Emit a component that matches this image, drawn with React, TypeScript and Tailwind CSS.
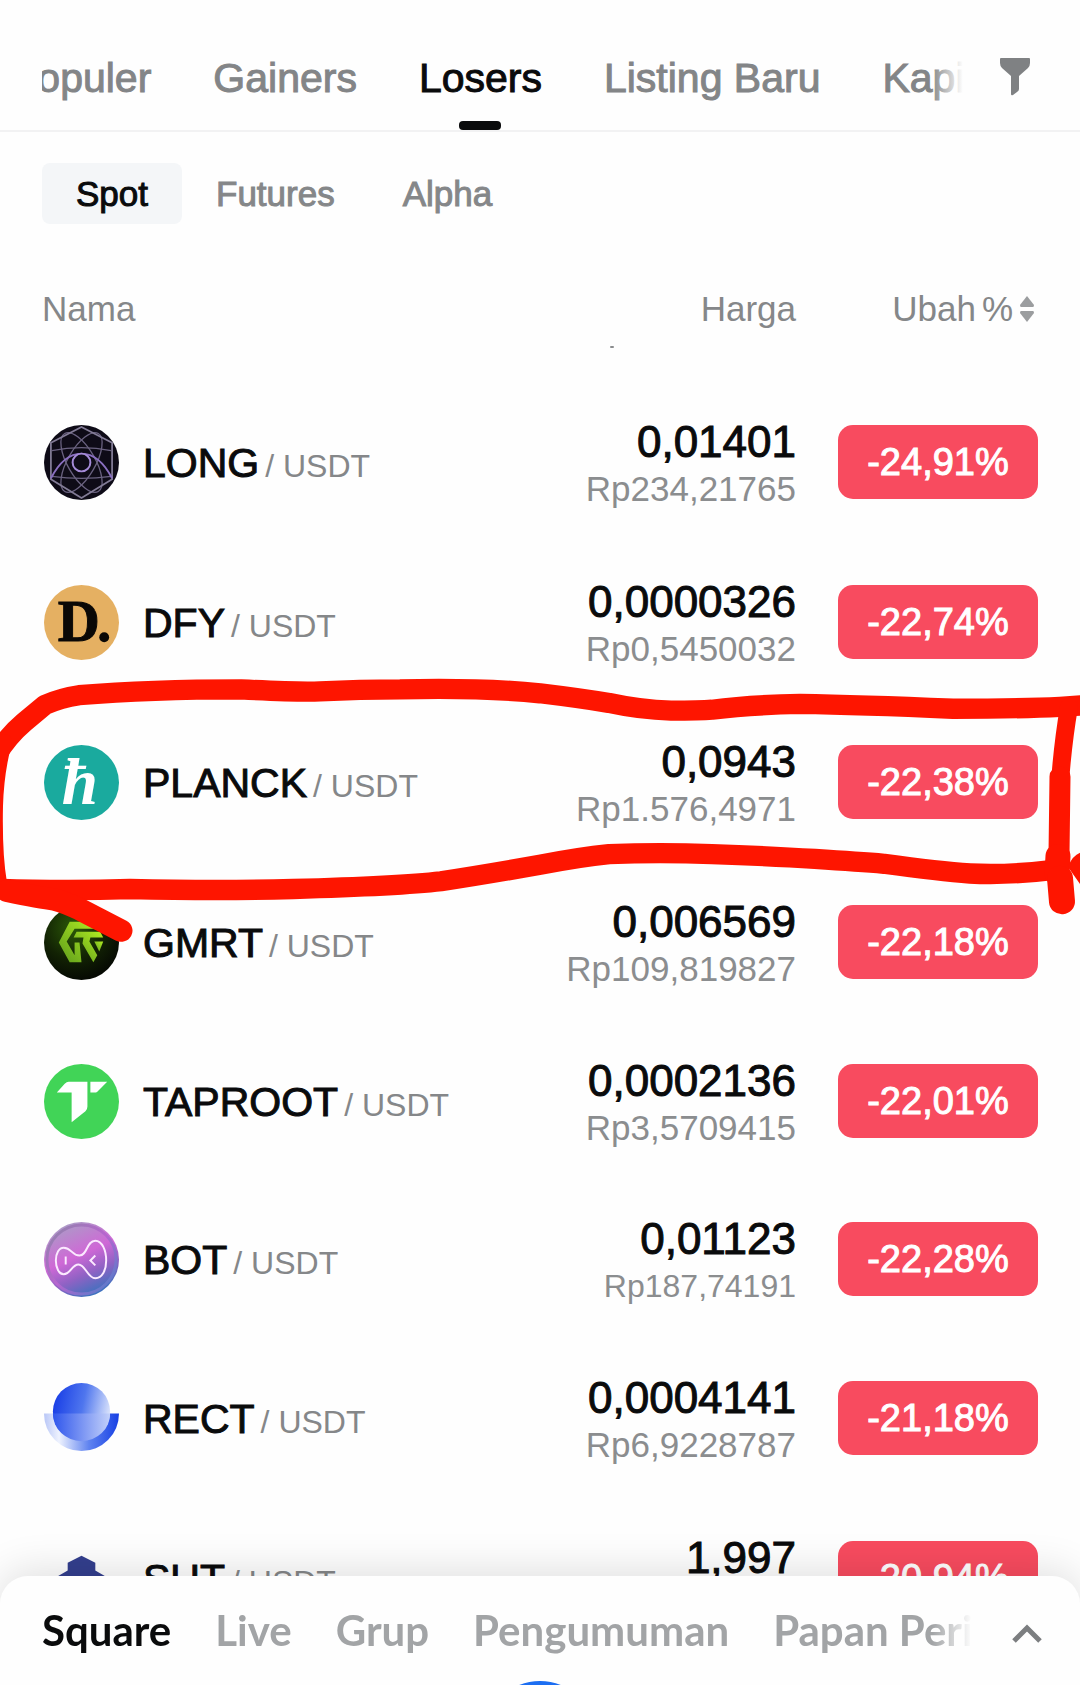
import { useState } from 'react';

interface Coin {
  symbol: string;
  price: string;
  fiat: string;
  change: string;
  icon: React.ReactNode;
  rowHeight?: string;
  smallFiat?: boolean;
}

const MARKET_TABS = ['Populer', 'Gainers', 'Losers', 'Listing Baru', 'Kapitalisasi'];
const PRODUCT_TABS = ['Spot', 'Futures', 'Alpha'];
const FEED_TABS = ['Square', 'Live', 'Grup', 'Pengumuman', 'Papan Peringkat'];

const COINS: Coin[] = [
  { symbol: 'LONG', price: '0,01401', fiat: 'Rp234,21765', change: '-24,91%', icon: <LongIcon /> },
  { symbol: 'DFY', price: '0,0000326', fiat: 'Rp0,5450032', change: '-22,74%', icon: <DfyIcon /> },
  { symbol: 'PLANCK', price: '0,0943', fiat: 'Rp1.576,4971', change: '-22,38%', icon: <PlanckIcon /> },
  { symbol: 'GMRT', price: '0,006569', fiat: 'Rp109,819827', change: '-22,18%', icon: <GmrtIcon /> },
  { symbol: 'TAPROOT', price: '0,0002136', fiat: 'Rp3,5709415', change: '-22,01%', icon: <TaprootIcon />, rowHeight: 'h-[158px]' },
  { symbol: 'BOT', price: '0,01123', fiat: 'Rp187,74191', change: '-22,28%', icon: <BotIcon />, rowHeight: 'h-[158px]', smallFiat: true },
  { symbol: 'RECT', price: '0,0004141', fiat: 'Rp6,9228787', change: '-21,18%', icon: <RectIcon /> },
  { symbol: 'SUT', price: '1,997', fiat: 'Rp33.385,84', change: '-20,94%', icon: <SutIcon /> },
];

export default function App() {
  const [market, setMarket] = useState('Losers');
  const [product, setProduct] = useState('Spot');
  const [feed, setFeed] = useState('Square');

  return (
    <div className="h-screen overflow-hidden bg-[#fefefe] font-['Liberation_Sans',Arial,sans-serif] text-[#0a0b0c]">
      {/* Market tabs, scrolled a little to the right */}
      <header className="flex h-[132px] items-stretch border-b-2 border-[#f2f2f3] px-[42px]">
        <nav className="relative min-w-0 flex-1 overflow-hidden">
          <div className="-ml-8 flex h-full gap-[62px] pt-[26px]">
            {MARKET_TABS.map((tab) => (
              <button
                key={tab}
                onClick={() => setMarket(tab)}
                className={`relative shrink-0 whitespace-nowrap text-[41px] leading-[104px] [-webkit-text-stroke:1px] ${
                  market === tab ? 'text-[#0a0b0c]' : 'text-[#838587]'
                }`}
              >
                {tab}
                {market === tab && (
                  <span className="absolute bottom-0 left-1/2 h-[9px] w-[42px] -translate-x-1/2 rounded-[4px] bg-[#0a0b0c]" />
                )}
              </button>
            ))}
          </div>
          <div className="absolute inset-y-0 right-0 w-8 bg-linear-to-r from-[#fefefe]/0 to-[#fefefe]" />
        </nav>
        <button aria-label="Filter" className="ml-9 mr-[7px] mt-[58px] flex h-[38px] w-8 shrink-0">
          <FilterIcon />
        </button>
      </header>

      {/* Product tabs */}
      <div className="flex px-[42px] pt-[31px]">
        {PRODUCT_TABS.map((tab) => (
          <button
            key={tab}
            onClick={() => setProduct(tab)}
            className={`h-[61px] rounded-lg px-[34px] text-[35px] leading-[61px] [-webkit-text-stroke:1px] ${
              product === tab ? 'bg-[#f4f6f8] text-[#0a0b0c]' : 'text-[#858789]'
            }`}
          >
            {tab}
          </button>
        ))}
      </div>

      <main className="relative pt-3">
        <table className="w-full border-collapse">
          <thead>
            <tr className="h-[146px] text-[35px] text-[#858789]">
              <th scope="col" className="pl-[42px] text-left font-normal">Nama</th>
              <th scope="col" className="relative pr-px text-right font-normal">
                Harga
                <span className="absolute bottom-[34px] right-[183px] h-0.5 w-1 rounded-full bg-[#8a8c8e]" />
              </th>
              <th scope="col" className="w-[283px] pr-[45px] text-right font-normal">
                <button className="inline-flex items-center gap-[6px] whitespace-nowrap">
                  <span>Ubah</span>
                  <span>%</span>
                  <SortIcon />
                </button>
              </th>
            </tr>
          </thead>
          <tbody>
            {COINS.map((coin) => (
              <CoinRow key={coin.symbol} coin={coin} />
            ))}
          </tbody>
        </table>
        <MarkerStroke />
      </main>

      {/* Feed sheet */}
      <footer className="fixed inset-x-0 bottom-0 h-[109px] rounded-t-[28px] bg-[#fefefe] shadow-[0_-6px_40px_rgba(0,0,0,0.12)]">
        <div className="flex h-full items-start pl-[42px] pr-[38px] pt-[26px]">
          <nav className="relative min-w-0 flex-1 overflow-hidden">
            <div className="flex gap-11">
              {FEED_TABS.map((tab) => (
                <button
                  key={tab}
                  onClick={() => setFeed(tab)}
                  className={`shrink-0 whitespace-nowrap font-['Lato',sans-serif] text-[42px] font-bold leading-[56px] ${
                    feed === tab ? 'text-[#0a0b0c]' : 'text-[#a2a4a6]'
                  }`}
                >
                  {tab}
                </button>
              ))}
            </div>
            <div className="absolute inset-y-0 right-0 w-10 bg-linear-to-r from-[#fefefe]/0 to-[#fefefe]" />
          </nav>
          <button aria-label="Buka" className="ml-10 mt-5 shrink-0">
            <ChevronIcon />
          </button>
        </div>
        <div className="absolute inset-x-0 bottom-0 flex h-1 justify-center overflow-hidden">
          <span className="size-28 shrink-0 rounded-full bg-[#1c6ef2]" />
        </div>
      </footer>
    </div>
  );
}

function CoinRow({ coin }: { coin: Coin }) {
  return (
    <tr className={coin.rowHeight ?? 'h-40'}>
      <td className="pl-11">
        <div className="flex items-center gap-6">
          <span className="size-[75px] shrink-0">{coin.icon}</span>
          <span className="flex items-baseline gap-[6px] whitespace-nowrap pt-1">
            <span className="text-[41px] leading-[48px] [-webkit-text-stroke:1px]">{coin.symbol}</span>
            <span className="text-[32px] text-[#858789]">/ USDT</span>
          </span>
        </div>
      </td>
      <td className="pr-px text-right">
        <div className="pt-[6px] text-[44px] leading-[48px] [-webkit-text-stroke:1px]">{coin.price}</div>
        <div className={`text-[#8b8d8f] ${coin.smallFiat ? 'text-[32px] leading-[46px]' : 'text-[35px] leading-[46px]'}`}>
          {coin.fiat}
        </div>
      </td>
      <td className="pl-[41px] pr-[42px]">
        <div className="h-[74px] rounded-[15px] bg-[#f84b5f] text-center text-[38px] leading-[74px] text-white [-webkit-text-stroke:1px]">
          {coin.change}
        </div>
      </td>
    </tr>
  );
}

/* Freehand red circle around the PLANCK row */
function MarkerStroke() {
  return (
    <svg
      className="pointer-events-none absolute left-0 top-[446px] h-[281px] w-full"
      viewBox="0 670 1080 290"
      preserveAspectRatio="none"
      fill="none"
      stroke="#fe1500"
      strokeLinecap="round"
      strokeLinejoin="round"
    >
      <path
        strokeWidth="21"
        d="M-4 758Q8 738 24 724L45 706Q60 699 79 696Q150 690 241 690Q300 693 320 692Q360 690 400 690Q480 688 540 694Q580 699 609 704Q640 711 671 712Q700 712 712 711Q750 706 800 705Q860 706 953 710Q1020 710 1060 708L1090 706"
      />
      <path strokeWidth="16" d="M4 744Q-4 775 -5 810Q-6 860 -1 890" />
      <path
        strokeWidth="21"
        d="M2 896Q30 897 69 897Q100 897 130 896Q220 898 293 896Q400 893 441 888Q480 882 540 871Q580 863 609 860Q660 858 712 860Q770 862 815 865Q860 868 884 870Q940 878 970 880Q1010 882 1056 876"
      />
      <path strokeWidth="23" d="M7 898Q40 905 55 907Q66 910 80 917L121 939" />
      <path strokeWidth="18" d="M1069 708Q1062 750 1059 800L1059 870" />
      <path strokeWidth="21" d="M1060 780L1059 860" />
      <path strokeWidth="25" d="M1058 862L1057 880" />
      <path strokeWidth="26" d="M1060 885L1062 909" />
      <path fill="#fe1500" strokeWidth="2" d="M1069 873Q1074 861 1082 859V892Z" />
    </svg>
  );
}

/* --- Icons --- */

function FilterIcon() {
  return (
    <svg width="32" height="38" viewBox="0 0 32 38" fill="#7f8183">
      <path d="M2 0H30Q31 0 31 1V5Q31 8 29 10L20 18V31Q20 33 18 34L14 37Q12 38 12 36V18L3 10Q1 8 1 5V1Q1 0 2 0Z" />
    </svg>
  );
}

function SortIcon() {
  return (
    <svg width="16" height="28" viewBox="0 0 16 28" fill="#9b9d9f">
      <path d="M8 1L15 10Q15 12 14 12H2Q1 12 1 10Z" />
      <path d="M8 27L15 18Q15 16 14 16H2Q1 16 1 18Z" />
    </svg>
  );
}

function ChevronIcon() {
  return (
    <svg width="30" height="22" viewBox="0 0 30 22" fill="none" stroke="#7c7e80" strokeWidth="5">
      <path d="M2 19L15 6L28 19" />
    </svg>
  );
}

function LongIcon() {
  return (
    <svg width="75" height="75" viewBox="0 0 76 76" fill="none">
      <circle cx="38" cy="38" r="38" fill="#0e0b17" />
      <g stroke="#6a6280" strokeWidth="1.3">
        <ellipse cx="38" cy="38" rx="14" ry="34" transform="rotate(30 38 38)" />
        <ellipse cx="38" cy="38" rx="14" ry="34" transform="rotate(-30 38 38)" />
        <path d="M8 26Q38 20 68 26M8 52Q38 56 68 52" />
      </g>
      <path d="M38 2L69 18V55L38 74L7 55V18Z" stroke="#827b96" strokeWidth="1.8" />
      <path d="M7 54Q20 29 38 29T69 54" stroke="#8a6fc0" strokeWidth="2" />
      <circle cx="38" cy="38" r="9" fill="#0e0b17" stroke="#a58bd8" strokeWidth="2" />
    </svg>
  );
}

function DfyIcon() {
  return (
    <svg width="75" height="75" viewBox="0 0 76 76">
      <circle cx="38" cy="38" r="38" fill="#e5b062" />
      <text
        x="14"
        y="57"
        fontFamily="'Liberation Serif', serif"
        fontSize="59"
        fontWeight="700"
        fill="#0a0806"
        stroke="#0a0806"
        strokeWidth="1"
      >
        D
      </text>
      <circle cx="61" cy="53" r="5" fill="#0a0806" />
    </svg>
  );
}

function PlanckIcon() {
  return (
    <svg width="75" height="75" viewBox="0 0 76 76">
      <circle cx="38" cy="38" r="38" fill="#1aaa9e" />
      <text x="18" y="60" fontFamily="'Liberation Serif', serif" fontSize="66" fontStyle="italic" fontWeight="700" fill="#fff">ħ</text>
    </svg>
  );
}

function GmrtIcon() {
  return (
    <svg width="75" height="75" viewBox="0 0 76 76">
      <defs>
        <radialGradient id="gmrt-bg" cx="0.4" cy="0.3" r="0.7">
          <stop offset="0" stopColor="#2c5a08" />
          <stop offset="0.6" stopColor="#122204" />
          <stop offset="1" stopColor="#060a03" />
        </radialGradient>
        <linearGradient id="gmrt-fg" x1="0" y1="1" x2="1" y2="0">
          <stop offset="0" stopColor="#5e9c1c" />
          <stop offset="1" stopColor="#b2ee22" />
        </linearGradient>
      </defs>
      <circle cx="38" cy="38" r="38" fill="url(#gmrt-bg)" />
      <g fill="url(#gmrt-fg)">
        <path d="M26 17H50L54 24H31L23 37L31 51V38H36L38 58H26L15 38Z" />
        <path d="M33 27H57L60 33H47L46 37L54 51L50 58L39 39L40 33H30Z" />
        <path d="M51 37H60L56 47Z" />
      </g>
    </svg>
  );
}

function TaprootIcon() {
  return (
    <svg width="75" height="75" viewBox="0 0 76 76">
      <circle cx="38" cy="38" r="38" fill="#41d457" />
      <g fill="#fff">
        <path d="M25 18H44V43Q44 46 42 48L28 59V29H13L21 20Q23 18 25 18Z" />
        <path d="M47 18H64L54 28Q53 29 51 29H47Z" />
      </g>
    </svg>
  );
}

function BotIcon() {
  return (
    <svg width="75" height="75" viewBox="0 0 76 76" fill="none">
      <defs>
        <linearGradient id="bot-bg" x1="0.25" y1="0" x2="0.7" y2="1">
          <stop offset="0" stopColor="#a99fc6" />
          <stop offset="0.45" stopColor="#cf68d6" />
          <stop offset="0.7" stopColor="#8f62c4" />
          <stop offset="1" stopColor="#2f74bd" />
        </linearGradient>
        <linearGradient id="bot-rim" x1="0" y1="0" x2="1" y2="1">
          <stop offset="0" stopColor="#8d86a8" />
          <stop offset="0.5" stopColor="#b765cf" />
          <stop offset="1" stopColor="#4580c8" />
        </linearGradient>
      </defs>
      <circle cx="38" cy="38" r="38" fill="url(#bot-bg)" />
      <circle cx="38" cy="38" r="35" stroke="url(#bot-rim)" strokeWidth="3" />
      <g stroke="#fbe9ff" strokeWidth="2">
        <path d="M20 26C28 26 28 34 36 34C44 34 43 19 52 19C59 19 63 29 63 39C63 49 59 57 52 57C44 57 42 43 35 43C28 43 27 53 20 53C15 53 12 46 12 39C12 32 15 26 20 26Z" />
        <path d="M22 35V43M52 34L47 39L52 44" />
      </g>
    </svg>
  );
}

function RectIcon() {
  return (
    <svg width="75" height="75" viewBox="0 0 76 76">
      <defs>
        <linearGradient id="rect-top" x1="0" y1="0.4" x2="1" y2="0.6">
          <stop offset="0" stopColor="#1a3fe6" />
          <stop offset="0.5" stopColor="#4f76ee" />
          <stop offset="1" stopColor="#dfe7fc" />
        </linearGradient>
        <linearGradient id="rect-low" x1="0" y1="0" x2="1" y2="0">
          <stop offset="0" stopColor="#2f56ec" />
          <stop offset="1" stopColor="#c3d1fa" />
        </linearGradient>
        <linearGradient id="rect-bowl" x1="0" y1="0" x2="1" y2="0">
          <stop offset="0" stopColor="#b9c7f7" />
          <stop offset="0.2" stopColor="#eef2fe" />
          <stop offset="0.6" stopColor="#5f83f0" />
          <stop offset="1" stopColor="#1740e4" />
        </linearGradient>
      </defs>
      <path d="M0 33H76A38 38 0 0 1 0 33Z" fill="url(#rect-bowl)" />
      <circle cx="38" cy="31" r="29" fill="url(#rect-top)" />
      <path d="M9 33H67A29 28 0 0 1 9 33Z" fill="url(#rect-low)" />
    </svg>
  );
}

function SutIcon() {
  return (
    <svg width="75" height="75" viewBox="0 0 76 76">
      <path d="M38 15L52 22V30L66 38V56L52 64L38 56L24 64L10 56V38L24 30V22Z" fill="#333f8e" />
    </svg>
  );
}
